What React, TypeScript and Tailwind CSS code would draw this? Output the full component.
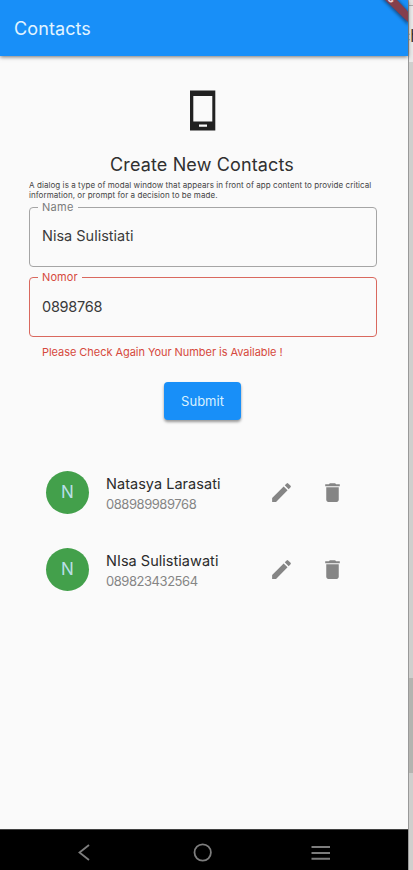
import React from "react";
import { MdEdit, MdDelete } from "react-icons/md";

function Field({ label, value, error }: { label: string; value: string; error?: boolean }) {
  return (
    <div
      className={
        "relative flex h-[60px] w-[348px] items-center rounded-[4px] border pl-3 " +
        (error ? "border-[#d9685e]" : "border-[#a5a5a5]")
      }
    >
      <span
        className={
          "absolute -top-[8px] left-[8px] bg-[#fafafa] px-[4px] text-[11px] leading-[15px] " +
          (error ? "text-[#d6493d] tracking-[0.1px]" : "text-[#7b7b7b] tracking-[0.3px]")
        }
      >
        {label}
      </span>
      <span
        className={
          "whitespace-nowrap text-[14.5px] leading-5 text-[#3a3a3a] " + (error ? "tracking-[-0.25px]" : "-mt-[2px]")
        }
      >
        {value}
      </span>
    </div>
  );
}

function Contact({ name, phone }: { name: string; phone: string }) {
  return (
    <div className="flex h-[77px] items-center pl-[46px]">
      <div className="flex size-[43px] items-center justify-center rounded-full bg-[#43a04b] text-[17px] font-normal text-[#b9dfe8]">
        N
      </div>
      <div className="ml-[17px] flex w-[163px] flex-col whitespace-nowrap pt-[2px]">
        <span className="text-[14.5px] leading-[21px] tracking-[0.03px] text-[#2b2b2b]">{name}</span>
        <span className="text-[13px] font-normal leading-[21px] tracking-[-0.45px] text-[#858585]">{phone}</span>
      </div>
      <MdEdit className="-mt-px size-[25px] text-[#858585]" />
      <MdDelete className="-mt-px ml-[26px] size-[25px] text-[#858585]" />
    </div>
  );
}

export default function App() {
  return (
    <div className="flex h-[870px] w-[413px] overflow-hidden bg-[#fafafa] font-['Inter','Noto_Sans',sans-serif]">
      <div className="flex w-[408px] flex-col">
        <header className="relative z-10 flex h-[56px] shrink-0 items-center bg-[#188ff8] pl-[14px] text-[18px] font-normal tracking-[0.1px] text-[#e2f4ff] shadow-[0_1px_4px_rgba(0,0,0,0.55)]">
          <span>Contacts</span>
          <svg className="absolute right-0 top-0" width="58" height="56" viewBox="350 0 58 56">
            <defs>
              <filter id="ribbonShadow" x="-50%" y="-50%" width="200%" height="200%">
                <feGaussianBlur stdDeviation="1.8" />
              </filter>
            </defs>
            <path d="M381-2 408 25V11L396-2Z" fill="#17375f" opacity=".7" filter="url(#ribbonShadow)" />
            <path d="M385 0h12L408 11.5V22Z" fill="#843f4c" />
            <text x="386.5" y="-1" transform="rotate(45 386.5 -1)" fontSize="9" fontWeight="800" fill="#f0d5d8">
              G
            </text>
          </svg>
        </header>

        <main className="flex h-[773px] shrink-0 flex-col">
          <div className="flex flex-col pl-[190px] pt-[34px]">
            <svg width="26" height="41" viewBox="0 0 26 41">
              <path
                fill="#212121"
                fillRule="evenodd"
                d="M0 .5h25.3v40H0ZM3.3 6v25.5h19V6ZM9 34.5v2.2h8v-2.2Z"
              />
            </svg>
          </div>
          <h1 className="mt-[22px] pr-[4px] text-center text-[18px] font-normal leading-[24px] tracking-[0.13px] text-[#303030]">
            Create New Contacts
          </h1>
          <p className="ml-[29px] mt-[3px] whitespace-nowrap text-[8px] leading-[10px] tracking-[0.07px] text-[#444]">
            A dialog is a type of modal window that appears in front of app content to provide critical
            <br />
            information, or prompt for a decision to be made.
          </p>
          <div className="ml-[29px] mt-[7px] flex flex-col gap-[10px]">
            <Field label="Name" value="Nisa Sulistiati" />
            <Field label="Nomor" value="0898768" error />
          </div>
          <p className="ml-[42px] mt-[7px] whitespace-nowrap text-[11px] leading-[16px] tracking-[-0.05px] text-[#d6493d]">
            Please Check Again Your Number is Available !
          </p>
          <button className="ml-[164px] mt-[22px] h-[38px] w-[77px] rounded-[4px] bg-[#188ff8] pt-[2px] text-[13px] text-[#d9f1ff] shadow-[0_2px_3px_rgba(0,0,0,0.4)]">
            Submit
          </button>
          <div className="mt-[34px] flex flex-col">
            <Contact name="Natasya Larasati" phone="088989989768" />
            <Contact name="NIsa Sulistiawati" phone="089823432564" />
          </div>
        </main>

        <nav className="flex h-[41px] shrink-0 bg-black">
          <svg width="408" height="41" viewBox="0 829 408 41" fill="none" stroke="#7d7d7d" strokeWidth="1.8">
            <path d="M0 829.3H408" stroke="#777" strokeWidth=".7" />
            <path d="M89 845 79.5 852.5 89 860" />
            <circle cx="202.7" cy="852.5" r="8.2" />
            <path d="M311.5 847H330M311.5 853H330M311.5 858.8H330" strokeWidth="2" />
          </svg>
        </nav>
      </div>

      <aside className="flex w-[5px] shrink-0 flex-col border-l border-[#999] bg-[#cfcfcd]">
        <div className="h-[5px] shrink-0 bg-[#e4e4e4]" />
        <div className="flex h-[57px] shrink-0 items-start overflow-hidden border-t border-[#aaa] bg-[#e9e9e9] pt-[20px] text-[17px] leading-[20px] text-[#333]">
          <span className="-ml-[8.5px]">ch</span>
        </div>
        <div className="h-[616px] shrink-0 bg-[#cfcfcd]" />
        <div className="h-[95px] shrink-0 bg-[#b4b4b0]" />
      </aside>
    </div>
  );
}
